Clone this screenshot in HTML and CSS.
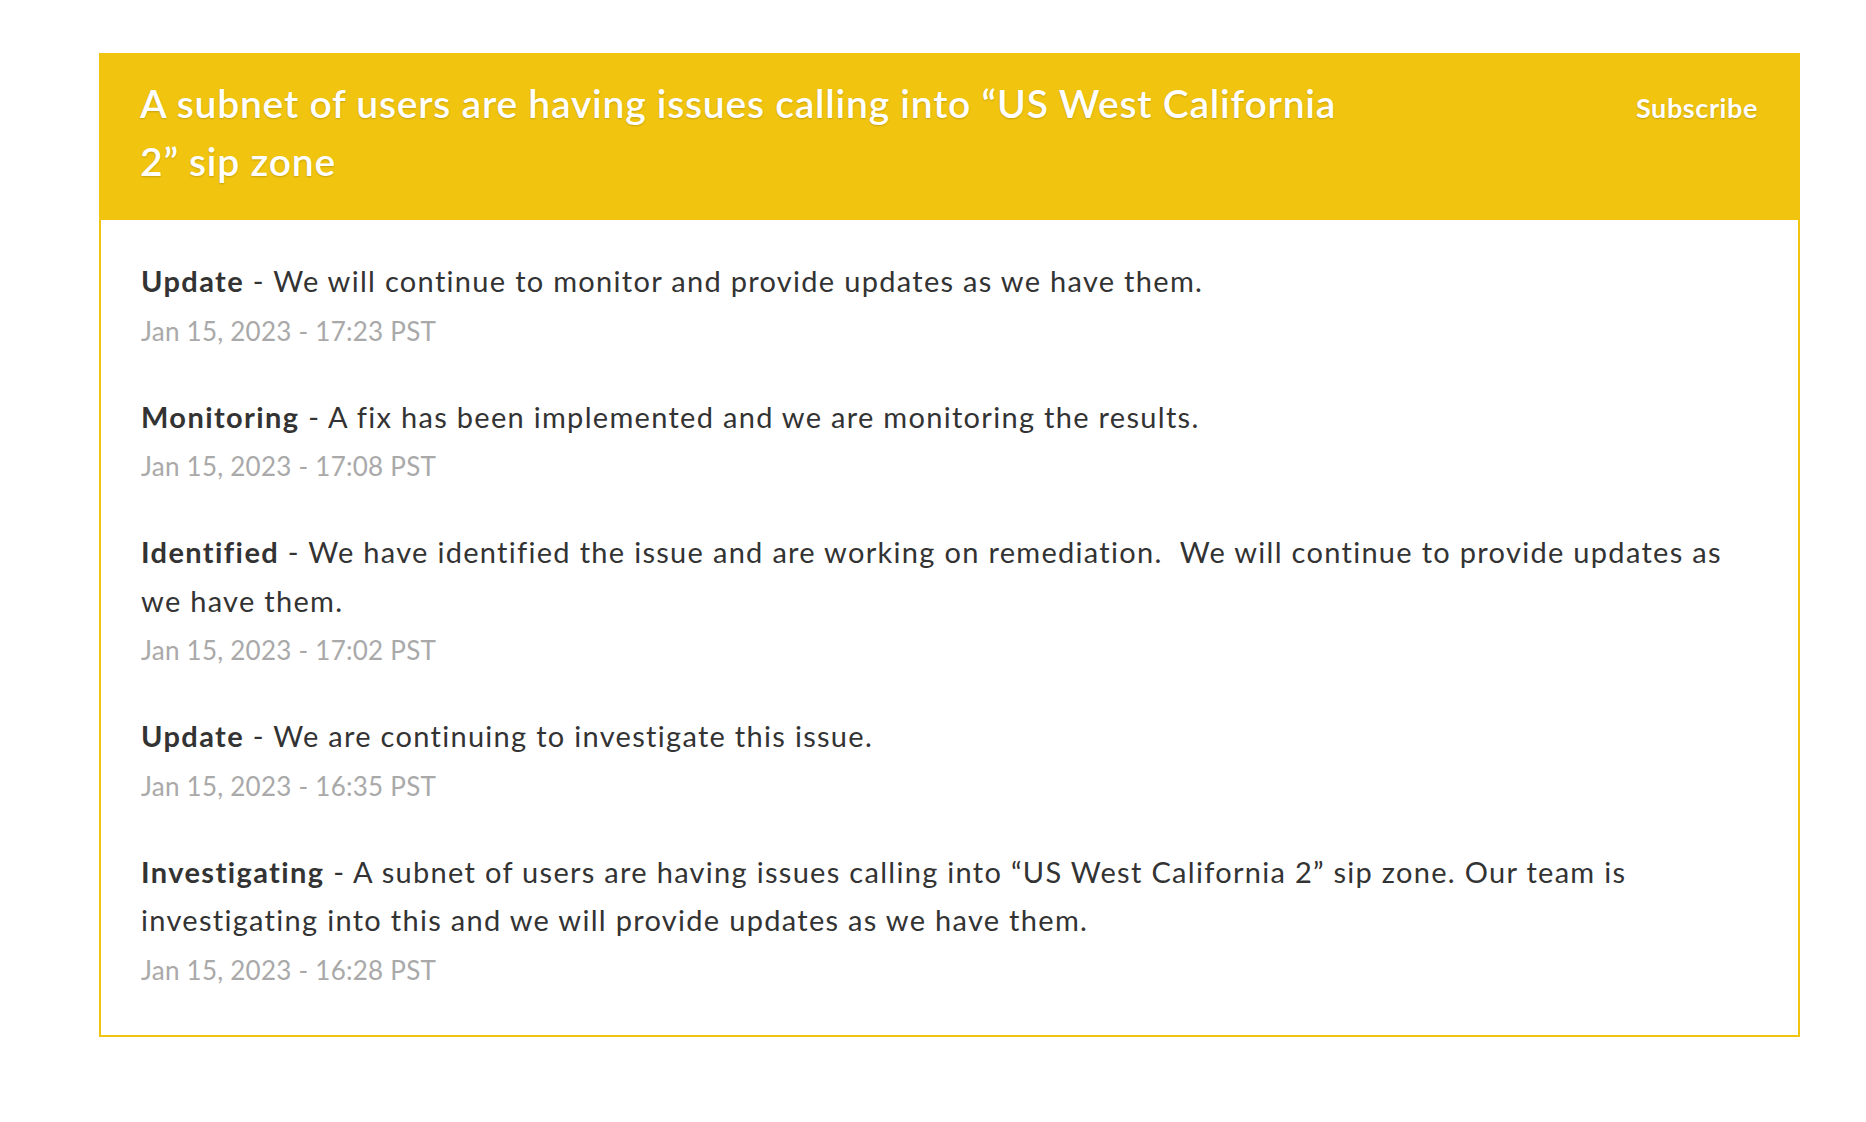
FILE: index.html
```html
<!DOCTYPE html>
<html lang="en">
<head>
<meta charset="utf-8">
<title>Incident</title>
<link rel="stylesheet" href="styles.css">
</head>
<body>
<div class="incident">
  <div class="incident-header">
    <h1 class="incident-title">A subnet of users are having issues calling into “US West California 2” sip zone</h1>
    <a class="subscribe" href="#">Subscribe</a>
  </div>
  <div class="updates">
    <div class="update">
      <p class="update-body"><strong>Update</strong> - We will continue to monitor and provide updates as we have them.</p>
      <p class="update-time">Jan 15, 2023 - 17:23 PST</p>
    </div>
    <div class="update">
      <p class="update-body"><strong>Monitoring</strong> - A fix has been implemented and we are monitoring the results.</p>
      <p class="update-time">Jan 15, 2023 - 17:08 PST</p>
    </div>
    <div class="update">
      <p class="update-body"><strong>Identified</strong> - We have identified the issue and are working on remediation.&nbsp; We will continue to provide updates as we have them.</p>
      <p class="update-time">Jan 15, 2023 - 17:02 PST</p>
    </div>
    <div class="update">
      <p class="update-body"><strong>Update</strong> - We are continuing to investigate this issue.</p>
      <p class="update-time">Jan 15, 2023 - 16:35 PST</p>
    </div>
    <div class="update">
      <p class="update-body"><strong>Investigating</strong> - A subnet of users are having issues calling into “US West California 2” sip zone. Our team is investigating into this and we will provide updates as we have them.</p>
      <p class="update-time">Jan 15, 2023 - 16:28 PST</p>
    </div>
  </div>
</div>
</body>
</html>
```
FILE: styles.css
```css
html, body {
  margin: 0;
  padding: 0;
  background: #ffffff;
}

body {
  font-family: "Lato", "Open Sans", sans-serif;
  color: #333333;
}

.incident {
  box-sizing: border-box;
  width: 1701px;
  margin: 53px 0 0 99px;
  border: 2px solid #f1c40f;
  border-top: 0;
}

.incident-header {
  display: flex;
  align-items: baseline;
  background: #f1c40f;
  margin: 0 -2px;
  padding: 22px 42px 30px 41px;
}

.incident-title {
  flex: 0 1 auto;
  max-width: 1228px;
  margin: 0;
  font-size: 39px;
  font-weight: 600;
  line-height: 57.6px;
  letter-spacing: 0.77px;
  color: #ffffff;
  text-shadow: 0 1px 2px rgba(0, 0, 0, 0.18);
}

.subscribe {
  margin-left: auto;
  font-size: 27px;
  font-weight: 700;
  letter-spacing: 0.6px;
  color: #ffffff;
  text-decoration: none;
  text-shadow: 0 1px 2px rgba(0, 0, 0, 0.18);
}

.updates {
  display: flex;
  flex-direction: column;
  gap: 42px;
  padding: 37px 40px 45px 40px;
}

.update-body {
  margin: 0;
  font-size: 29px;
  line-height: 48.5px;
  letter-spacing: 1.3px;
  color: #333333;
}

.update-body strong {
  font-weight: 700;
  letter-spacing: 1.4px;
}

.update-time {
  margin: 5px 0 0;
  font-size: 26px;
  line-height: 40px;
  letter-spacing: 0.25px;
  color: #a9a9a9;
}
```
